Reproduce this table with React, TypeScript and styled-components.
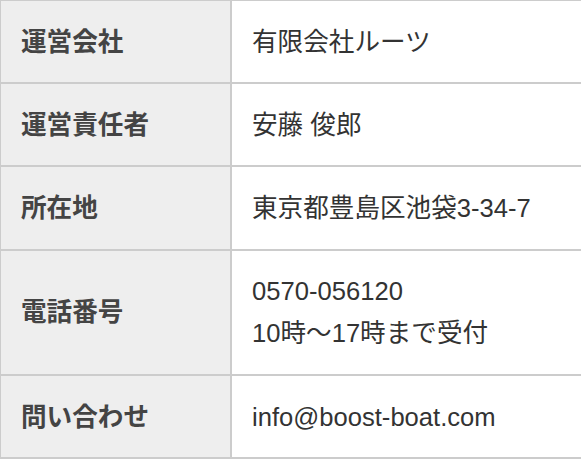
import styled, { createGlobalStyle } from "styled-components";

const GlobalStyle = createGlobalStyle`
  html, body {
    margin: 0;
    padding: 0;
    background: #fff;
    overflow: hidden;
  }
  body {
    font-family: "Liberation Sans", Arial, "Noto Sans CJK JP", sans-serif;
  }
`;

const companyInfo = [
  { label: "運営会社", value: ["有限会社ルーツ"] },
  { label: "運営責任者", value: ["安藤 俊郎"] },
  { label: "所在地", value: ["東京都豊島区池袋3-34-7"] },
  { label: "電話番号", value: ["0570-056120", "10時〜17時まで受付"] },
  { label: "問い合わせ", value: ["info@boost-boat.com"] },
];

export default function App() {
  return (
    <>
      <GlobalStyle />
      <Wrapper>
        <InfoTable>
          <colgroup>
            <col style={{ width: "231px" }} />
            <col />
          </colgroup>
          <tbody>
            {companyInfo.map((item, idx) => (
              <tr key={"row" + idx}>
                <Label>{item.label}</Label>
                <Value>
                  {item.value.map((line, i) => (
                    <Line key={"line" + i}>{line}</Line>
                  ))}
                </Value>
              </tr>
            ))}
          </tbody>
        </InfoTable>
      </Wrapper>
    </>
  );
}

const Wrapper = styled.div`
  width: 581px;
  height: 460px;
  overflow: hidden;
`;

const InfoTable = styled.table`
  width: 640px;
  margin: -1px 0 0 -1px;
  border-collapse: collapse;
  table-layout: fixed;
  font-size: 25.6px;
  line-height: 1.65;
`;

const Label = styled.th`
  background-color: #eeeeee;
  border: 2px solid #cccccc;
  padding: 19.5px 20px;
  text-align: left;
  vertical-align: middle;
  font-weight: bold;
  color: #444444;
`;

const Value = styled.td`
  background-color: #ffffff;
  border: 2px solid #cccccc;
  padding: 19.5px 20px;
  text-align: left;
  vertical-align: middle;
  color: #333333;
`;

const Line = styled.div`
  white-space: nowrap;
`;
